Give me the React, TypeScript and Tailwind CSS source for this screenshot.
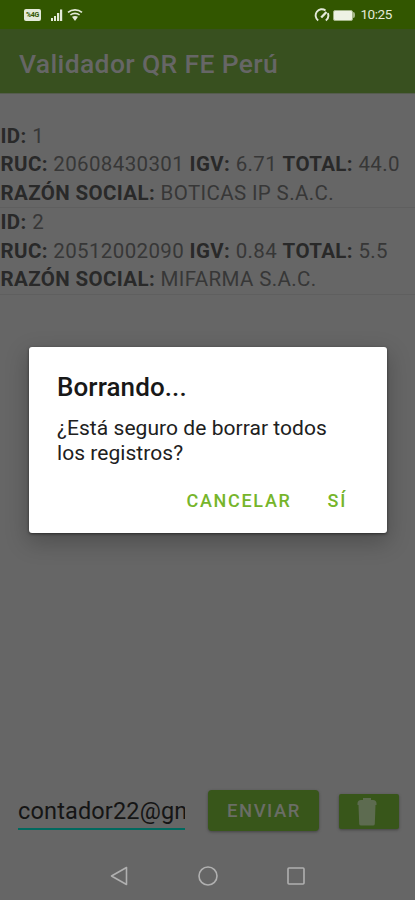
const records = [
  { id: 1, ruc: "20608430301", igv: "6.71", total: "44.0", name: "BOTICAS IP S.A.C." },
  { id: 2, ruc: "20512002090", igv: "0.84", total: "5.5", name: "MIFARMA S.A.C." },
];

const StatusBar = () => {
  return (
    <div className="flex h-[29px] items-center bg-[#325600] pl-6 pr-[23px] pt-px text-[#e4ead9]">
      <div className="flex h-[12px] w-[17px] items-center justify-center rounded-[2px] bg-[#e4ead9] text-[7px] font-bold leading-none tracking-[-0.3px] text-[#325600]">
        %4G
      </div>
      <svg className="ml-[10px] h-3 w-3" viewBox="0 0 12 12" fill="currentColor">
        <rect x="0" y="9" width="2" height="3" />
        <rect x="3" y="7" width="2" height="5" />
        <rect x="6" y="4" width="2.2" height="8" />
        <rect x="9" y="0.5" width="2.2" height="11.5" />
      </svg>
      <svg className="ml-1 h-3 w-4" viewBox="0 0 16 12" fill="none" stroke="currentColor" strokeWidth="1.6">
        <path d="M1 3.4C5 0 11 0 15 3.4" />
        <path d="M3.4 6C6 3.8 10 3.8 12.6 6" />
        <path d="M5 7.8c2-1.2 4-1.2 6 0L8 12z" fill="currentColor" stroke="none" />
      </svg>
      <svg className="ml-auto h-[14px] w-4" viewBox="0 0 16 14" fill="none" stroke="currentColor" strokeWidth="1.9">
        <path d="M4.2 12.4A6 6 0 1 1 11.5 2.4M13.8 5.2a6 6 0 0 1-2 7.2" />
        <path d="M7.2 9.5 12.5 4" strokeWidth="2.4" />
      </svg>
      <div className="ml-[3px] h-[11px] w-[20px] rounded-[2px] border border-[#a4b588] bg-[#eef2e4]" />
      <div className="h-[6px] w-[2px] rounded-r-sm bg-[#a4b588]" />
      <span className="ml-[5px] text-[13.5px] leading-none tracking-[-0.4px]">10:25</span>
    </div>
  );
};

const RecordList = () => {
  return (
    <div className="flex-1 pt-7 text-[20.5px] leading-[28.4px] tracking-[0.37px] whitespace-nowrap text-[#373737]">
      {records.map((r) => (
        <div key={r.id} className="h-[86.3px] border-b border-[#5f5f5f] pl-[0.5px]">
          <p><b className="font-bold text-[#292929]">ID:</b> {r.id}</p>
          <p>
            <b className="font-bold text-[#292929]">RUC:</b> {r.ruc} <b className="font-bold text-[#292929]">IGV:</b> {r.igv}{" "}
            <b className="font-bold text-[#292929]">TOTAL:</b> {r.total}
          </p>
          <p><b className="font-bold text-[#292929]">RAZÓN SOCIAL:</b> {r.name}</p>
        </div>
      ))}
    </div>
  );
};

const BottomForm = () => {
  return (
    <div className="flex h-[59px] items-start pl-[18px] pr-4">
      <div className="h-[40px] w-[167px] overflow-hidden border-b-2 border-[#00695f] pt-[7px] text-[23.5px] leading-7 tracking-[0.15px] text-[#151515]">
        contador22@gn
      </div>
      <button className="ml-[23px] h-[41px] w-[111px] rounded-[4px] bg-[#38561a] pl-px pt-0.5 text-[18.5px] font-medium tracking-[1.5px] text-[#6a6d66] shadow-[0_1px_3px_rgba(0,0,0,0.35)]">
        ENVIAR
      </button>
      <button className="ml-auto mt-1 flex h-[35px] w-[60px] items-center rounded-[2px] bg-[#38561a] pl-[18px] shadow-[0_1px_3px_rgba(0,0,0,0.35)]">
        <svg className="h-7 w-5" viewBox="0 0 20 28" fill="#5d6b50">
          <path d="M6 0h8v2h2q3 0 3.500 3v2h-1l-.7 19q-.1 1.500-1.800 1.500H4q-1.700 0-1.800-1.500L1.500 7h-1V5Q1 2 4 2h2z" />
        </svg>
      </button>
    </div>
  );
};

const NavBar = () => {
  return (
    <svg className="h-[51px] w-full" viewBox="0 0 415 51" fill="none" stroke="#b0b0b0" strokeWidth="1.6">
      <path d="M126.5 18.500v17L111.500 27z" strokeLinejoin="round" />
      <circle cx="208" cy="27" r="9" />
      <rect x="288" y="19" width="16" height="16" rx="1" />
    </svg>
  );
};

const ConfirmDialog = () => {
  return (
    <div className="absolute left-[29px] top-[347px] h-[186px] w-[358px] rounded-[3px] bg-white px-7 pt-[24px] shadow-[0_8px_22px_2px_rgba(0,0,0,0.22),0_1px_3px_rgba(0,0,0,0.5)]">
      <h2 className="text-[26px] font-medium leading-8 tracking-[0.1px] text-[#181818]">Borrando...</h2>
      <p className="mt-[13px] whitespace-nowrap text-[21px] leading-[25px] tracking-[0.05px] text-[#202020]">
        ¿Está seguro de borrar todos
        <br />
        los registros?
      </p>
      <div className="mt-[23px] flex justify-end gap-9 pr-3 text-[18px] font-medium leading-6 tracking-[1.7px] text-[#76b52b]">
        <button>CANCELAR</button>
        <button>SÍ</button>
      </div>
    </div>
  );
};

const App = () => {
  return (
    <div className="relative flex h-[900px] w-[415px] flex-col overflow-hidden bg-[#666] font-['Roboto',sans-serif]">
      <StatusBar />
      <header className="flex h-[65px] items-center border-b border-[#555c4e] bg-[#38501f] pl-[19px] pt-[5px] text-[26.5px] font-medium tracking-[0.35px] text-[#666]">
        Validador QR FE Perú
      </header>
      <RecordList />
      <BottomForm />
      <NavBar />
      <ConfirmDialog />
    </div>
  );
};

export default App;
